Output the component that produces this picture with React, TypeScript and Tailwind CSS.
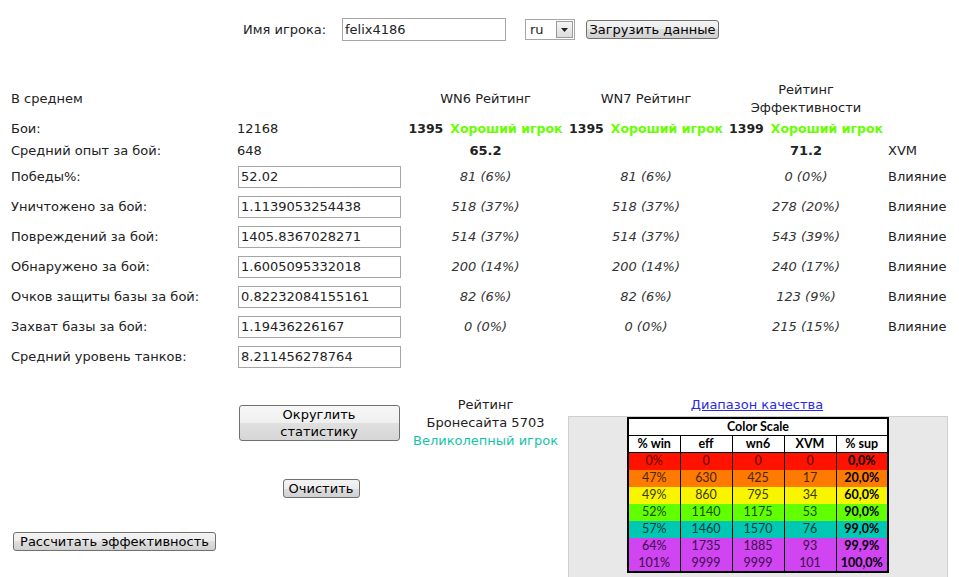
import React from "react";

const font = { fontFamily: '"DejaVu Sans", Verdana, sans-serif' };

const btn =
  "rounded-[3px] border border-[#707070] bg-[linear-gradient(#f3f3f3_0%,#ececec_50%,#dedede_50%,#d0d0d0_100%)] text-[13px] leading-[15px] text-black flex items-center justify-center";

const inputCls =
  "border border-[#a6a6a6] bg-white text-[13px] text-[#222] pl-[2px] flex items-center";

const cols = "grid grid-cols-[226px_168px_161px_160px_160px_1fr]";

const inputRows: [string, string, string, string, string][] = [
  ["Победы%:", "52.02", "81 (6%)", "81 (6%)", "0 (0%)"],
  ["Уничтожено за бой:", "1.1139053254438", "518 (37%)", "518 (37%)", "278 (20%)"],
  ["Повреждений за бой:", "1405.8367028271", "514 (37%)", "514 (37%)", "543 (39%)"],
  ["Обнаружено за бой:", "1.6005095332018", "200 (14%)", "200 (14%)", "240 (17%)"],
  ["Очков защиты базы за бой:", "0.82232084155161", "82 (6%)", "82 (6%)", "123 (9%)"],
  ["Захват базы за бой:", "1.19436226167", "0 (0%)", "0 (0%)", "215 (15%)"],
];

const scale: [string, string, string, string, string, string, string][] = [
  ["0%", "0", "0", "0", "0,0%", "#ff1200", "#5a0a00"],
  ["47%", "630", "425", "17", "20,0%", "#ff7a00", "#4a2500"],
  ["49%", "860", "795", "34", "60,0%", "#f9f400", "#3d3a00"],
  ["52%", "1140", "1175", "53", "90,0%", "#62ff00", "#1b4a00"],
  ["57%", "1460", "1570", "76", "99,0%", "#00c8b2", "#003d36"],
  ["64%", "1735", "1885", "93", "99,9%", "#d044f2", "#3d0d4a"],
  ["101%", "9999", "9999", "101", "100,0%", "#d044f2", "#3d0d4a"],
];

function Rating({ n }: { n: string }) {
  return (
    <div className="flex items-center justify-center whitespace-nowrap font-bold text-[12.5px]">
      <span className="text-[#222]">{n}</span>
      <span className="ml-[7px] text-[#66ff00]">Хороший игрок</span>
    </div>
  );
}

export default function App() {
  return (
    <div
      className="w-[959px] h-[577px] overflow-hidden bg-white text-[13px] text-[#222]"
      style={font}
    >
      {/* top bar */}
      <div className="flex items-center pt-[18px] pl-[243px] h-[41px]">
        <div className="w-[99px]">Имя игрока:</div>
        <div className={`${inputCls} w-[164px] h-[23px]`}>felix4186</div>
        <div className="ml-[19px] w-[50px] h-[21px] border border-[#a6a6a6] bg-white flex items-center justify-between pl-[4px] pr-[1px]">
          <span className="text-[13px]">ru</span>
          <div className="w-[17px] h-[17px] border border-[#9a9a9a] bg-[linear-gradient(#f6f6f6,#dcdcdc)] flex items-center justify-center">
            <svg width="7" height="4" viewBox="0 0 7 4">
              <polygon points="0,0 7,0 3.5,4" fill="#222" />
            </svg>
          </div>
        </div>
        <button className={`${btn} ml-[11px] w-[133px] h-[19px]`}>Загрузить данные</button>
      </div>

      {/* main table */}
      <div className="mt-[39px] pl-[11px]">
        <div className={`${cols} h-[38px] items-center`}>
          <div>В среднем</div>
          <div />
          <div className="text-center">WN6 Рейтинг</div>
          <div className="text-center">WN7 Рейтинг</div>
          <div className="text-center leading-[18px]">
            Рейтинг
            <br />
            Эффективности
          </div>
          <div />
        </div>

        <div className={`${cols} h-[22px] items-center`}>
          <div>Бои:</div>
          <div>12168</div>
          <Rating n="1395" />
          <Rating n="1395" />
          <Rating n="1399" />
          <div />
        </div>

        <div className={`${cols} h-[22px] items-center`}>
          <div>Средний опыт за бой:</div>
          <div>648</div>
          <div className="text-center font-bold">65.2</div>
          <div />
          <div className="text-center font-bold">71.2</div>
          <div className="pl-[2px]">XVM</div>
        </div>

        {inputRows.map((r) => (
          <div key={r[0]} className={`${cols} h-[30px] items-center`}>
            <div>{r[0]}</div>
            <div className={`${inputCls} ml-[1px] w-[163px] h-[22px]`}>{r[1]}</div>
            <div className="text-center italic text-[#333]">{r[2]}</div>
            <div className="text-center italic text-[#333]">{r[3]}</div>
            <div className="text-center italic text-[#333]">{r[4]}</div>
            <div className="pl-[2px]">Влияние</div>
          </div>
        ))}

        <div className={`${cols} h-[30px] items-center`}>
          <div>Средний уровень танков:</div>
          <div className={`${inputCls} ml-[1px] w-[163px] h-[22px]`}>8.211456278764</div>
        </div>

        {/* bottom section */}
        <div className="grid grid-cols-[226px_168px_161px_1fr]">
          <div className="pt-[160px]">
            <button className={`${btn} ml-[2px] w-[203px] h-[19px]`}>Рассчитать эффективность</button>
          </div>
          <div className="flex flex-col items-center pt-[33px]">
            <button className={`${btn} -ml-[4px] w-[161px] h-[36px] leading-[17px] text-center bg-[linear-gradient(#f7f7f7_0%,#efefef_50%,#e0e0e0_50%,#d6d6d6_100%)]`}>
              Округлить
              <br />
              статистику
            </button>
            <button className={`${btn} mt-[38px] w-[77px] h-[19px]`}>Очистить</button>
          </div>
          <div className="pt-[24px] text-center leading-[18px]">
            <div>Рейтинг</div>
            <div>Бронесайта 5703</div>
            <div className="text-[#17c4a8]">Великолепный игрок</div>
          </div>
          <div className="pt-[24px] flex flex-col">
            <div className="w-[382px] text-center leading-[18px]">
              <span className="text-[#2a2ae6] underline">Диапазон качества</span>
            </div>
            <div className="ml-[2px] mt-[2px] w-[380px] h-[200px] bg-[#e8e8e8] border border-[#cfcfcf]">
              <table
                className="mx-auto border-collapse border-2 border-black text-center"
                style={{ fontFamily: 'Lato, "Open Sans", sans-serif' }}
              >
                <tbody>
                  <tr className="bg-white h-[17px]">
                    <td colSpan={5} className="border-b border-black font-bold text-[12.5px] leading-[16px] text-black">
                      Color Scale
                    </td>
                  </tr>
                  <tr className="bg-white h-[17px]">
                    {["% win", "eff", "wn6", "XVM", "% sup"].map((h) => (
                      <td
                        key={h}
                        className="w-[52px] border border-black font-bold text-[12.5px] leading-[16px] text-black"
                      >
                        {h}
                      </td>
                    ))}
                  </tr>
                  {scale.map((r) => (
                    <tr key={r[0]} className="h-[17px]" style={{ backgroundColor: r[5] }}>
                      {r.slice(0, 5).map((c, i) => (
                        <td
                          key={i}
                          className={`w-[52px] border-x border-black text-[12.5px] leading-[16px] p-0 ${
                            i === 4 ? "font-bold text-black" : ""
                          }`}
                          style={i === 4 ? undefined : { color: r[6] }}
                        >
                          {c}
                        </td>
                      ))}
                    </tr>
                  ))}
                </tbody>
              </table>
            </div>
          </div>
        </div>
      </div>
    </div>
  );
}
